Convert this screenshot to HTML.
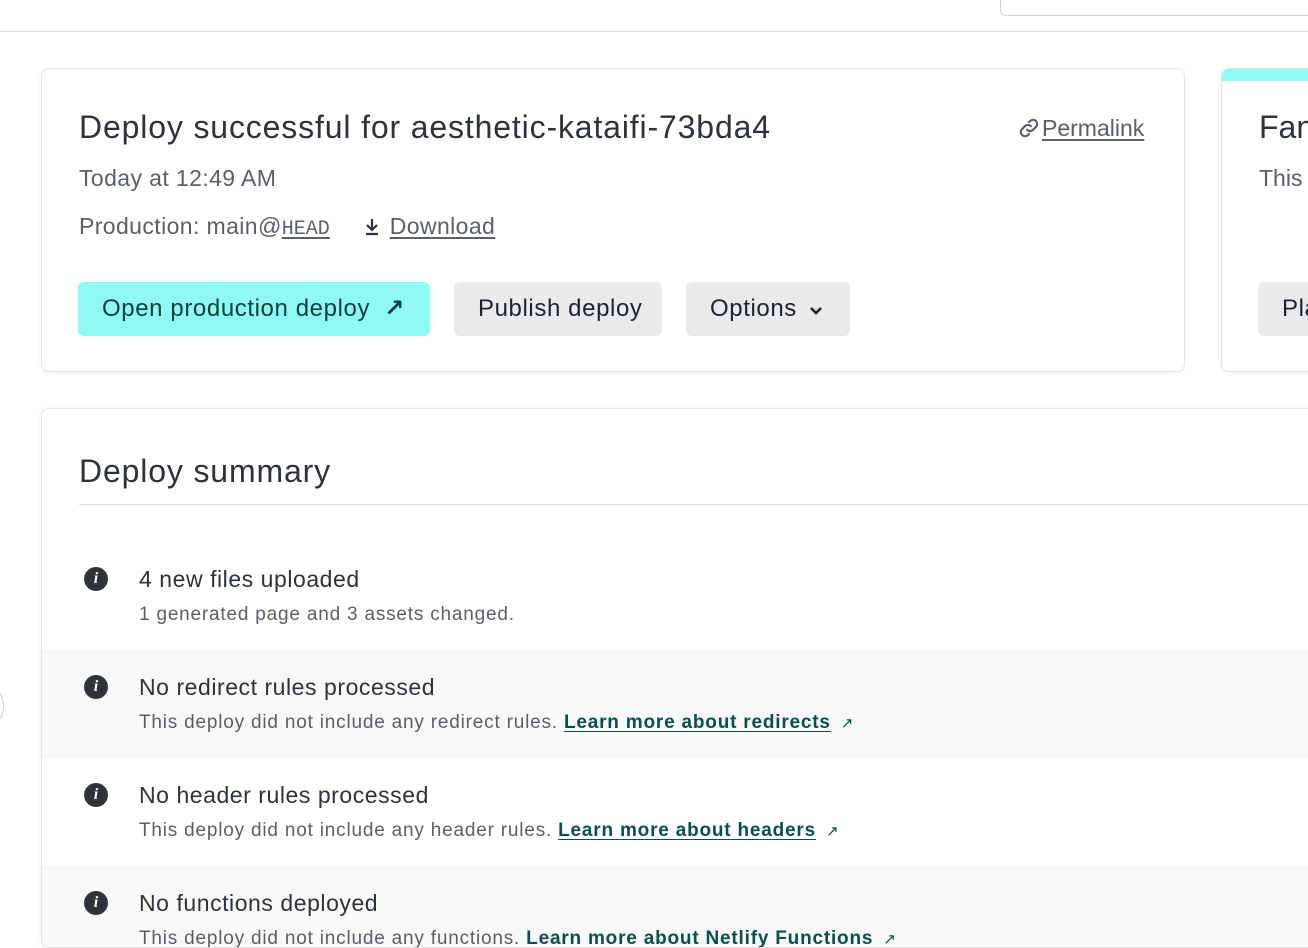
<!DOCTYPE html>
<html><head><meta charset="utf-8"><style>
*{box-sizing:border-box;margin:0;padding:0}
html,body{width:1308px;height:948px;overflow:hidden}
body{background:#fff;font-family:"Liberation Sans","DejaVu Sans",sans-serif;color:#2d3338;position:relative}
.hdr{position:absolute;left:0;top:0;width:1308px;height:32px;border-bottom:1px solid #d6d6d6;background:#fff}
.srch{position:absolute;left:1000px;top:-10px;width:320px;height:26px;border:1px solid #d4d4d4;border-radius:6px}
.card{position:absolute;background:#fff;border:1px solid #e4e4e4;border-radius:8px;box-shadow:0 1px 6px rgba(0,0,0,.06)}
.t{position:absolute;white-space:nowrap}
.btn{position:absolute;top:213px;height:54px;border-radius:6px;font-size:24px;line-height:54px;padding:0 24px;background:#e9eaec;color:#1f2327;letter-spacing:.6px;white-space:nowrap;overflow:hidden}
a{color:inherit;text-decoration:underline;text-underline-offset:3px}
.row{position:absolute;left:0;width:1300px;height:108px}
.ic{position:absolute;left:42px;top:25px;width:24px;height:24px;border-radius:50%;background:#2d3338;color:#fff;font:italic bold 16px "Liberation Serif",serif;text-align:center;line-height:24px}
.rt{position:absolute;left:97px;top:24px;font-size:23px;color:#2d3338;white-space:nowrap;letter-spacing:.55px}
.rs{position:absolute;left:97px;top:62px;font-size:19px;color:#5a6066;white-space:nowrap;letter-spacing:.8px}
.rs a{color:#0b4f4a;font-weight:bold;letter-spacing:.8px}
.ar{color:#0b4f4a;font-size:15px;margin-left:10px;text-decoration:none}
</style></head><body>
<div class="hdr"><div class="srch"></div></div>
<div style="position:absolute;left:-14px;top:690px;width:18px;height:32px;border:1px solid #ccc;border-radius:50%"></div>
<div class="card" style="left:41px;top:68px;width:1144px;height:304px">
 <div class="t" style="left:37px;top:40px;font-size:32px;color:#2d3338;letter-spacing:.85px">Deploy successful for aesthetic-kataifi-73bda4</div>
 <div class="t" style="left:976px;top:46px;font-size:23px;color:#5a6066"><svg width="22" height="22" viewBox="0 0 24 24" style="vertical-align:-3px" fill="none" stroke="#5a6066" stroke-width="2.4" stroke-linecap="round"><path d="M10 14a4.5 4.5 0 0 0 6.4 0l3.2-3.2a4.5 4.5 0 0 0-6.4-6.4l-1.2 1.2"/><path d="M14 10a4.5 4.5 0 0 0-6.4 0l-3.2 3.2a4.5 4.5 0 0 0 6.4 6.4l1.2-1.2"/></svg><a style="margin-left:2px">Permalink</a></div>
 <div class="t" style="left:37px;top:96px;font-size:23px;color:#5a6066;letter-spacing:.4px">Today at 12:49 AM</div>
 <div class="t" style="left:37px;top:144px;font-size:23px;color:#5a6066;letter-spacing:.4px">Production: main@<a style="font-family:'Liberation Mono',monospace;font-size:20px;letter-spacing:0">HEAD</a><svg width="16" height="18" viewBox="0 0 16 18" style="margin-left:34px;margin-right:10px;vertical-align:-2px" fill="none" stroke="#2d3338" stroke-width="2.2"><path d="M8 1v11M3 7l5 5 5-5M2 16h12"/></svg><a>Download</a></div>
 <div class="btn" style="left:36px;width:352px;background:#8ff9f4;color:#0b3f3b">Open production deploy<span style="margin-left:14px;font-weight:bold">↗</span></div>
 <div class="btn" style="left:412px;width:208px">Publish deploy</div>
 <div class="btn" style="left:644px;width:164px">Options<svg width="14" height="10" viewBox="0 0 14 10" style="margin-left:12px" fill="none" stroke="#1f2327" stroke-width="2.6"><path d="M2 2l5 5 5-5"/></svg></div>
</div>
<div class="card" style="left:1221px;top:68px;width:120px;height:304px;overflow:hidden">
 <div style="height:12px;background:#8ff9f4"></div>
 <div class="t" style="left:37px;top:40px;font-size:32px">Fan</div>
 <div class="t" style="left:37px;top:96px;font-size:23px;color:#5a6066">This</div>
 <div class="btn" style="left:36px;width:120px">Pla</div>
</div>
<div class="card" style="left:41px;top:408px;width:1300px;height:540px;overflow:hidden">
 <div class="t" style="left:37px;top:44px;font-size:32px;letter-spacing:.85px">Deploy summary</div>
 <div style="position:absolute;left:37px;top:95px;width:1300px;height:1px;background:#ddd"></div>
 <div class="row" style="top:133px"><div class="ic">i</div><div class="rt">4 new files uploaded</div><div class="rs">1 generated page and 3 assets changed.</div></div>
 <div class="row" style="top:241px;background:#f8f8f8"><div class="ic">i</div><div class="rt">No redirect rules processed</div><div class="rs">This deploy did not include any redirect rules. <a>Learn more about redirects</a><span class="ar">↗</span></div></div>
 <div class="row" style="top:349px"><div class="ic">i</div><div class="rt">No header rules processed</div><div class="rs">This deploy did not include any header rules. <a>Learn more about headers</a><span class="ar">↗</span></div></div>
 <div class="row" style="top:457px;background:#f8f8f8"><div class="ic">i</div><div class="rt">No functions deployed</div><div class="rs">This deploy did not include any functions. <a>Learn more about Netlify Functions</a><span class="ar">↗</span></div></div>
</div>
</body></html>
